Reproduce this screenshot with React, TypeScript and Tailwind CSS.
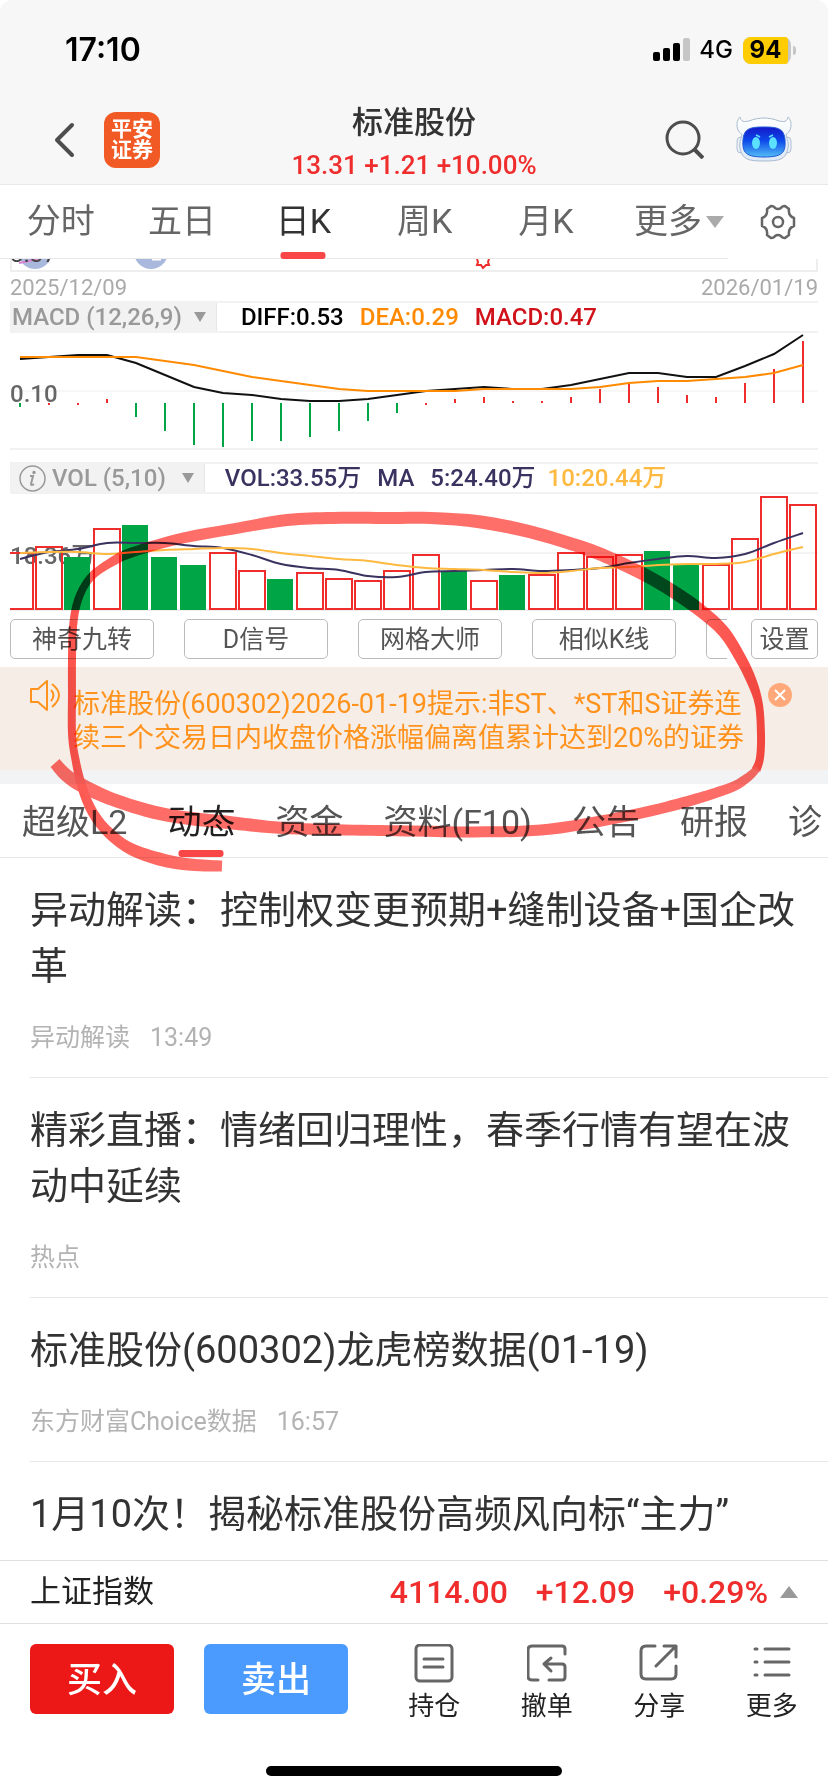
import { ReactNode } from "react";

const RED = "#f02d2d";
const GREEN = "#00a645";
const STEP = 29;

const periodTabs = ["分时", "五日", "日K", "周K", "月K"];
const tools = ["神奇九转", "D信号", "网格大师", "相似K线"];
const infoTabs = ["超级L2", "动态", "资金", "资料(F10)", "公告", "研报", "诊"];

const news = [
    { title: "异动解读：控制权变更预期+缝制设备+国企改革", source: "异动解读", time: "13:49" },
    { title: "精彩直播：情绪回归理性，春季行情有望在波动中延续", source: "热点", time: "" },
    { title: "标准股份(600302)龙虎榜数据(01-19)", source: "东方财富Choice数据", time: "16:57" },
    { title: "1月10次！揭秘标准股份高频风向标“主力”", source: "", time: "" },
];

// [height above the zero line, is red]
const macdBars: [number, boolean][] = [
    [-4, false], [-2, true], [-2, true], [4, true], [-14, false], [-28, false], [-42, false], [-44, false],
    [-38, false], [-38, false], [-34, false], [-28, false], [-18, false], [-10, false], [-2, true], [4, true],
    [6, true], [2, true], [2, true], [6, true], [14, true], [19, true], [16, true], [8, true],
    [6, true], [20, true], [34, true], [62, true],
];
const diff = [27, 25, 23, 23, 31, 43, 55, 61, 63, 67, 69, 69, 67, 63, 59, 57, 55, 57, 57, 53, 47, 41, 41, 45, 45, 34, 22, 3];
const dea = [25, 25, 25, 25, 25, 29, 33, 39, 45, 49, 53, 57, 59, 59, 59, 59, 57, 57, 57, 57, 55, 51, 49, 49, 47, 45, 41, 33];

// [top, is red]
const volBars: [number, boolean][] = [
    [59, true], [53, true], [63, false], [35, true], [31, false], [63, false], [71, false], [59, true],
    [77, true], [85, false], [79, true], [85, true], [87, true], [77, true], [61, true], [77, false],
    [87, true], [81, false], [81, true], [59, true], [63, true], [61, true], [57, false], [71, false],
    [71, true], [45, true], [3, true], [11, true],
];
const ma5 = [65, 58, 55, 49, 49, 49, 52, 54, 61, 70, 74, 76, 82, 83, 78, 77, 76, 75, 77, 76, 74, 69, 65, 62, 64, 60, 49, 39];
const ma10 = [59, 58, 58, 60, 58, 56, 55, 54, 55, 59, 62, 65, 67, 71, 74, 75, 76, 78, 79, 77, 74, 73, 71, 70, 70, 68, 60, 53];

function toPoints(values: number[]) {
    return values.map((v, i) => `${10 + STEP * i},${v}`).join(" ");
}

function smooth(pts: number[][]) {
    let d = "";
    for (let i = 0; i < pts.length - 1; i++) {
        const p0 = pts[i - 1] || pts[i];
        const p1 = pts[i];
        const p2 = pts[i + 1];
        const p3 = pts[i + 2] || p2;
        d += `C${p1[0] + (p2[0] - p0[0]) / 6},${p1[1] + (p2[1] - p0[1]) / 6} ${p2[0] - (p3[0] - p1[0]) / 6},${p2[1] - (p3[1] - p1[1]) / 6} ${p2[0]},${p2[1]} `;
    }
    return d;
}

function smoothLine(values: number[]) {
    const pts = values.map((v, i) => [10 + STEP * i, v]);
    return `M${pts[0][0]},${pts[0][1]} ${smooth(pts)}`;
}

// closed outline of a marker stroke: points are [x, y, thickness]
function ribbon(pts: number[][]) {
    const left: number[][] = [];
    const right: number[][] = [];
    pts.forEach((p, i) => {
        const a = pts[i - 1] || p;
        const b = pts[i + 1] || p;
        const len = Math.hypot(b[0] - a[0], b[1] - a[1]);
        const nx = (-(b[1] - a[1]) / len) * (p[2] / 2);
        const ny = ((b[0] - a[0]) / len) * (p[2] / 2);
        left.push([p[0] + nx, p[1] + ny]);
        right.unshift([p[0] - nx, p[1] - ny]);
    });
    return `M${left[0][0]},${left[0][1]} ${smooth(left)} L${right[0][0]},${right[0][1]} ${smooth(right)} Z`;
}

const loopStroke = [
    [222, 866, 11], [195, 865, 12], [167, 861, 13], [133, 850, 12], [110, 834, 11], [93, 813, 10], [82, 787, 9],
    [75, 757, 8], [72, 733, 8], [72, 693, 8], [72, 660, 8], [73, 627, 8], [78, 600, 8], [90, 578, 8], [110, 563, 9],
    [133, 552, 10], [183, 538, 11], [233, 529, 11], [287, 520, 12], [333, 518, 12], [385, 518, 12], [431, 518, 12],
    [481, 522, 13], [531, 532, 13], [581, 547, 13], [614, 560, 13], [647, 576, 13], [674, 592, 13], [701, 611, 13],
    [724, 632, 12], [741, 659, 11], [752, 682, 10], [759, 705, 8], [761, 735, 8], [760, 758, 8], [756, 770, 9],
];
const baseStroke = [
    [55, 763, 12], [66, 775, 13], [83, 786, 14], [117, 801, 13], [167, 815, 13], [233, 823, 13], [283, 828, 12],
    [345, 830, 11], [414, 831, 11], [475, 832, 11], [541, 830, 11], [601, 821, 11], [667, 807, 11], [727, 789, 10],
    [747, 778, 9], [758, 768, 7],
];

function Marker() {
    return (
        <svg className="absolute left-0 top-0 w-full pointer-events-none mix-blend-multiply" viewBox="0 0 828 900" aria-hidden="true">
            <defs>
                <linearGradient id="ink" gradientUnits="userSpaceOnUse" x1="60" y1="0" x2="765" y2="0">
                    <stop offset="0" stopColor="#fb4f49" />
                    <stop offset="0.05" stopColor="#fd5f58" />
                    <stop offset="0.2" stopColor="#ff6f69" />
                    <stop offset="0.85" stopColor="#ff6f69" />
                    <stop offset="1" stopColor="#fb4a44" />
                </linearGradient>
            </defs>
            <path d={ribbon(loopStroke)} fill="url(#ink)" />
            <path d={ribbon(baseStroke)} fill="#fd5c55" opacity="0.9" />
        </svg>
    );
}

function StatusBar() {
    return (
        <div className="h-[100px] pl-[65px] pr-8 flex items-center justify-between font-[Inter,sans-serif] text-black">
            <span className="text-[32px] leading-none font-semibold">17:10</span>
            <div className="flex items-center gap-2">
                <svg width="38" height="24" viewBox="0 0 38 24" aria-hidden="true">
                    <rect x="0" y="14" width="7" height="9" rx="2" />
                    <rect x="10" y="10" width="7" height="13" rx="2" />
                    <rect x="20" y="5" width="7" height="18" rx="2" />
                    <rect x="30" y="0" width="7" height="23" rx="2" fill="#c6c6c6" />
                </svg>
                <span className="text-2xl leading-none font-medium">4G</span>
                <div className="flex items-center gap-[2px] ml-[2px]">
                    <div className="bg-[#c6c6c6] rounded-[8px] pr-[3px]">
                        <div className="w-[45px] h-[27px] rounded-l-[8px] rounded-r-[3px] bg-[#ffcc00] flex items-center justify-center text-2xl leading-none font-bold">94</div>
                    </div>
                    <div className="w-[3px] h-[9px] rounded-r-full bg-[#c6c6c6]"></div>
                </div>
            </div>
        </div>
    );
}

function Robot() {
    return (
        <svg width="56" height="46" viewBox="0 0 56 46" aria-hidden="true">
            <defs>
                <linearGradient id="face" x1="0" y1="0" x2="0" y2="1">
                    <stop offset="0" stopColor="#1418c8" />
                    <stop offset="0.45" stopColor="#0d49ea" />
                    <stop offset="1" stopColor="#52bdf5" />
                </linearGradient>
                <linearGradient id="shell" x1="0" y1="0" x2="0" y2="1">
                    <stop offset="0" stopColor="#ffffff" />
                    <stop offset="1" stopColor="#dde9f6" />
                </linearGradient>
            </defs>
            <rect x="1" y="21" width="8" height="16" rx="4" fill="#eaf1f9" stroke="#aebfd3" />
            <rect x="47" y="21" width="8" height="16" rx="4" fill="#eaf1f9" stroke="#aebfd3" />
            <path d="M4 1 C1 4 0 9 2 14 C3 17 6 17 6 20 C3 26 3 32 6 38 C9 44 15 45 28 45 C41 45 47 44 50 38 C53 32 53 26 50 20 C50 17 53 17 54 14 C56 9 55 4 52 1 C51 6 48 6 43 5 C33 1 23 1 13 5 C8 6 5 6 4 1 Z" fill="url(#shell)" stroke="#a9bbd0" />
            <path d="M7 24 C8 13 13 11 28 11 C43 11 48 13 49 24 C50 37 46 41 28 41 C10 41 6 37 7 24 Z" fill="url(#face)" stroke="#1d55d8" />
            <ellipse cx="20" cy="27" rx="4" ry="6" fill="#5be0ff" />
            <ellipse cx="37" cy="27" rx="4" ry="6" fill="#5be0ff" />
            <path d="M20 19 L24 21 M37 19 L33 21" stroke="#5be0ff" strokeWidth="1.5" />
        </svg>
    );
}

function Header() {
    return (
        <header className="h-[85px] border-b border-[#e8e8e8] grid grid-cols-[1fr_auto_1fr] items-start">
            <div className="flex items-center pl-[54px] pt-3 gap-7">
                <button type="button" aria-label="返回">
                    <svg width="22" height="36" viewBox="0 0 22 36" fill="none" stroke="#4d4d4d" strokeWidth="4" strokeLinecap="round" strokeLinejoin="round">
                        <path d="M18 3 L3 18 L18 33" />
                    </svg>
                </button>
                <a href="#" className="w-[56px] h-[56px] rounded-xl bg-[#f15a24] text-white text-[21px] leading-[21px] font-bold flex flex-col items-center justify-center">
                    <span>平安</span>
                    <span>证券</span>
                </a>
            </div>
            <div className="text-center pt-px">
                <h1 className="text-[31px] leading-[44px] font-medium text-[#333]">标准股份</h1>
                <p className="text-[26px] leading-10 font-medium text-[#f02d2d]">13.31 +1.21 +10.00%</p>
            </div>
            <div className="flex items-center justify-end gap-8 pr-[36px] pt-4">
                <button type="button" aria-label="搜索">
                    <svg width="40" height="40" viewBox="0 0 40 40" fill="none" stroke="#4d4d4d" strokeWidth="3">
                        <circle cx="19" cy="19" r="16" />
                        <path d="M30 30 L39 39" strokeWidth="4" />
                    </svg>
                </button>
                <button type="button" aria-label="智能助手">
                    <Robot />
                </button>
            </div>
        </header>
    );
}

function PeriodTabs() {
    return (
        <nav className="h-[74px] flex text-[34px] text-[#666]">
            <div className="flex-1 grid grid-cols-6 border-b border-[#e8e8e8]">
                {periodTabs.map((tab) => (
                    <button key={tab} type="button" className={tab === "日K" ? "relative text-[#333]" : "relative"}>
                        {tab}
                        {tab === "日K" && <span className="absolute left-1/2 -translate-x-1/2 -bottom-px w-[45px] h-[7px] rounded-[3px] bg-[#f94646]"></span>}
                    </button>
                ))}
                <button type="button" className="flex items-center justify-end gap-1 pr-1">
                    更多
                    <svg width="18" height="12" viewBox="0 0 18 12" fill="#aaa" aria-hidden="true"><path d="M0 0 H18 L9 12 Z" /></svg>
                </button>
            </div>
            <button type="button" aria-label="设置" className="w-[100px] flex items-center justify-center">
                <svg width="36" height="36" viewBox="0 0 36 36" fill="none" stroke="#666" strokeWidth="2.5" strokeLinejoin="round">
                    <path d="M11 2 Q14 2 15 4 Q18 6 21 4 Q22 2 25 2 L29 5 Q28 12 34 14 V22 Q28 24 29 31 L25 34 Q22 34 21 32 Q18 30 15 32 Q14 34 11 34 L7 31 Q8 24 2 22 V14 Q8 12 7 5 Z" />
                    <circle cx="18" cy="18" r="5" />
                </svg>
            </button>
        </nav>
    );
}

function ChartLabel({ children }: { children: ReactNode }) {
    return (
        <button type="button" className="h-full pr-[10px] bg-[#f2f2f2] text-[#999] flex items-center border-r border-[#e8e8e8]">
            {children}
            <svg width="12" height="10" viewBox="0 0 12 10" fill="#999" aria-hidden="true"><path d="M0 0 H12 L6 10 Z" /></svg>
        </button>
    );
}

function Charts() {
    return (
        <section className="px-[10px]">
            <svg className="block w-full" viewBox="0 0 808 14" fill="none">
                <path d="M1 0 V12 H807 V0" stroke="#eee" strokeWidth="2" />
                <circle cx="25" cy="-7" r="17" fill="#a9b9de" />
                <circle cx="141" cy="-7" r="17" fill="#a9b9de" />
                <path d="M142 0 H151" stroke="#fff" strokeWidth="3" />
                <path d="M9 4 L29 0" stroke="#d983d2" strokeWidth="2" />
                <text x="0" y="3" fontSize="24" fill="#444">8.37</text>
                <path d="M467 0 L468 3 L467 6 L471 6 L473 9 L476 6 L479 6 L478 3 L479 0" stroke={RED} strokeWidth="2" />
            </svg>
            <div className="h-7 flex items-center justify-between text-[22px] text-[#aaa]">
                <span>2025/12/09</span>
                <span>2026/01/19</span>
            </div>
            <div className="h-8 border-y-2 border-[#f2f2f2] flex items-center text-2xl font-medium">
                <ChartLabel><span className="pl-[2px] pr-3">MACD (12,26,9)</span></ChartLabel>
                <span className="ml-6 text-black">DIFF:0.53</span>
                <span className="ml-4 text-[#ff8a00]">DEA:0.29</span>
                <span className="ml-4 text-[#d0121b]">MACD:0.47</span>
            </div>
            <svg className="block w-full" viewBox="0 0 808 117" fill="none">
                <path d="M0 58 H808" stroke="#eee" strokeWidth="1" />
                <path d="M0 116 H808" stroke="#f2f2f2" strokeWidth="2" />
                <g transform="translate(0 -1)">
                    {macdBars.map(([h, red], i) => (
                        <rect key={i} x={9 + STEP * i} y={h > 0 ? 71 - h : 71} width="2" height={Math.abs(h)} fill={red ? RED : GREEN} />
                    ))}
                    <polyline points={toPoints(diff)} stroke="#111" strokeWidth="2" />
                    <polyline points={toPoints(dea)} stroke="#ff8a00" strokeWidth="2" />
                    <text x="0" y="70" fontSize="24" fontWeight="500" fill="#666">0.10</text>
                </g>
            </svg>
            <div className="mt-3 h-8 border-y-2 border-[#f2f2f2] flex items-center text-2xl font-medium text-[#3a3360]">
                <ChartLabel>
                    <svg className="ml-[9px]" width="27" height="27" viewBox="0 0 27 27" fill="none" stroke="#999" strokeWidth="1.5" aria-hidden="true">
                        <circle cx="13.5" cy="13.5" r="12.5" />
                        <path d="M11 11 H14 L12 19 Q12 21 15 19" strokeWidth="2" />
                        <circle cx="15" cy="7.5" r="1" fill="#999" />
                    </svg>
                    <span className="pl-[6px] pr-4">VOL (5,10)</span>
                </ChartLabel>
                <span className="ml-5">VOL:33.55万</span>
                <span className="ml-4">MA</span>
                <span className="ml-4">5:24.40万</span>
                <span className="ml-3 text-[#fdb940]">10:20.44万</span>
            </div>
            <svg className="block w-full" viewBox="0 0 808 117" fill="none">
                <path d="M0 59 H808" stroke="#e8e8e8" strokeWidth="1" />
                <text x="0" y="70" fontSize="24" fontWeight="500" fill="#666">18.36万</text>
                <path d="M0 116 H808" stroke="#eee" strokeWidth="2" />
                {volBars.map(([top, red], i) =>
                    red ? (
                        <rect key={i} x={-3 + STEP * i} y={top} width="26" height={115 - top} stroke={RED} strokeWidth="2" />
                    ) : (
                        <rect key={i} x={-4 + STEP * i} y={top} width="26" height={116 - top} fill={GREEN} />
                    )
                )}
                <path d={smoothLine(ma5)} stroke="#3a3360" strokeWidth="2" />
                <path d={smoothLine(ma10)} stroke="#fdb940" strokeWidth="2" />
            </svg>
            <div className="py-[8px] flex justify-between text-[25px] text-[#555]">
                <div className="flex-1 flex gap-[30px] overflow-hidden mr-6">
                    {tools.map((tool) => (
                        <button key={tool} type="button" className="w-[144px] h-10 shrink-0 rounded-[5px] border border-[#bbb] leading-none">{tool}</button>
                    ))}
                    <span className="w-[144px] h-10 shrink-0 rounded-[5px] border border-[#bbb]"></span>
                </div>
                <button type="button" className="w-[67px] h-10 rounded-[5px] border border-[#bbb] leading-none">设置</button>
            </div>
        </section>
    );
}

function Notice() {
    return (
        <div className="bg-[#f5ede6] border-b-[14px] border-[#f2f3f5] pl-[29px] pr-[36px] pb-[15px] flex items-start">
            <svg className="mt-3 shrink-0" width="33" height="33" viewBox="0 0 33 33" fill="none" stroke="#ff931e" strokeWidth="2" strokeLinejoin="round" aria-hidden="true">
                <path d="M2 10 H9 L18 2 V31 L9 23 H2 Z" />
                <path d="M22 11 Q27 16 22 22 M23 5 Q37 16 23 28" />
            </svg>
            <p className="pt-5 pl-[11px] flex-1 text-[27px] leading-[34px] text-[#ff931e] whitespace-nowrap">
                标准股份(600302)2026-01-19提示:非ST、*ST和S证券连<br />
                续三个交易日内收盘价格涨幅偏离值累计达到20%的证券
            </p>
            <button type="button" aria-label="关闭" className="mt-4 w-6 h-6 rounded-full bg-[#ffa97a] flex items-center justify-center">
                <svg width="12" height="12" viewBox="0 0 12 12" stroke="#fff" strokeWidth="2"><path d="M1 1 L11 11 M11 1 L1 11" /></svg>
            </button>
        </div>
    );
}

function BottomItem({ label, children }: { label: string; children: ReactNode }) {
    return (
        <button type="button" className="flex-1 flex flex-col items-center gap-[6px] text-[26px] leading-8 text-[#222]">
            <svg width="40" height="40" viewBox="0 0 40 40" fill="none" stroke="#666" strokeWidth="3" strokeLinecap="round" strokeLinejoin="round" aria-hidden="true">
                {children}
            </svg>
            {label}
        </button>
    );
}

export default function App() {
    return (
        <div className="relative min-h-screen h-screen flex flex-col overflow-hidden bg-white font-[Roboto,'Noto_Sans_CJK_SC',sans-serif]">
            <div className="bg-[#f7f7f7] rounded-t-xl">
                <StatusBar />
                <Header />
            </div>
            <PeriodTabs />
            <Charts />
            <Notice />
            <nav className="h-[74px] shrink-0 border-b border-[#e8e8e8] pl-[22px] flex gap-10 overflow-hidden whitespace-nowrap text-[34px] text-[#555]">
                {infoTabs.map((tab) => (
                    <button key={tab} type="button" className={tab === "动态" ? "relative shrink-0 pt-1 text-[#222]" : "relative shrink-0 pt-1"}>
                        {tab}
                        {tab === "动态" && <span className="absolute left-1/2 -translate-x-1/2 bottom-0 w-[45px] h-[7px] rounded-[3px] bg-[#f94646]"></span>}
                    </button>
                ))}
            </nav>
            <main className="flex-1 min-h-0 overflow-hidden pl-[30px]">
                {news.map((item) => (
                    <article key={item.title} className="pt-6 pb-[25px] border-b border-[#e8e8e8]">
                        <h2 className="pr-[30px] text-[38px] leading-[56px] text-[#333]">{item.title}</h2>
                        <p className="mt-[30px] flex gap-5 text-[25px] leading-7 text-[#b3b3b3]">
                            <span>{item.source}</span>
                            <span>{item.time}</span>
                        </p>
                    </article>
                ))}
            </main>
            <div className="h-16 shrink-0 border-y border-[#e0e0e0] pl-[30px] pr-[30px] flex items-center text-[32px] font-medium text-[#f02d2d]">
                <span className="flex-1 text-[31px] font-normal text-[#222]">上证指数</span>
                <span>4114.00</span>
                <span className="ml-7">+12.09</span>
                <span className="ml-7">+0.29%</span>
                <svg className="ml-3" width="18" height="12" viewBox="0 0 18 12" fill="#999" aria-hidden="true"><path d="M0 12 H18 L9 0 Z" /></svg>
            </div>
            <footer className="shrink-0 pt-5 pb-4">
                <div className="flex items-start pl-[30px]">
                    <button type="button" className="w-[144px] h-[70px] pt-1 rounded-md bg-[#eb1817] text-white text-[35px] font-medium">买入</button>
                    <button type="button" className="ml-[30px] w-[144px] h-[70px] pt-1 rounded-md bg-[#4b9bff] text-white text-[35px] font-medium">卖出</button>
                    <div className="ml-[30px] flex-1 flex">
                        <BottomItem label="持仓">
                            <rect x="2" y="1" width="36" height="36" rx="4" />
                            <path d="M10 15 H29 M10 23 H29" />
                        </BottomItem>
                        <BottomItem label="撤单">
                            <path d="M38 10 V5 Q38 2 35 2 H5 Q1 2 1 6 V32 Q1 36 5 36 H11" />
                            <path d="M22 36 H35 Q38 36 38 33 V23 Q38 20 35 20 H17 M24 14 L17 20 L24 27" />
                        </BottomItem>
                        <BottomItem label="分享">
                            <path d="M16 2 H7 Q2 2 2 7 V30 Q2 35 7 35 H32 Q37 35 37 30 V22" />
                            <path d="M25 2 H37 V13 M37 2 L17 22" />
                        </BottomItem>
                        <BottomItem label="更多">
                            <path d="M3 5 H5 M13 5 H37 M3 18 H5 M13 18 H37 M3 31 H5 M13 31 H37" />
                        </BottomItem>
                    </div>
                </div>
                <div className="mx-auto mt-11 w-[296px] h-[10px] rounded-full bg-black"></div>
            </footer>
            <Marker />
        </div>
    );
}
